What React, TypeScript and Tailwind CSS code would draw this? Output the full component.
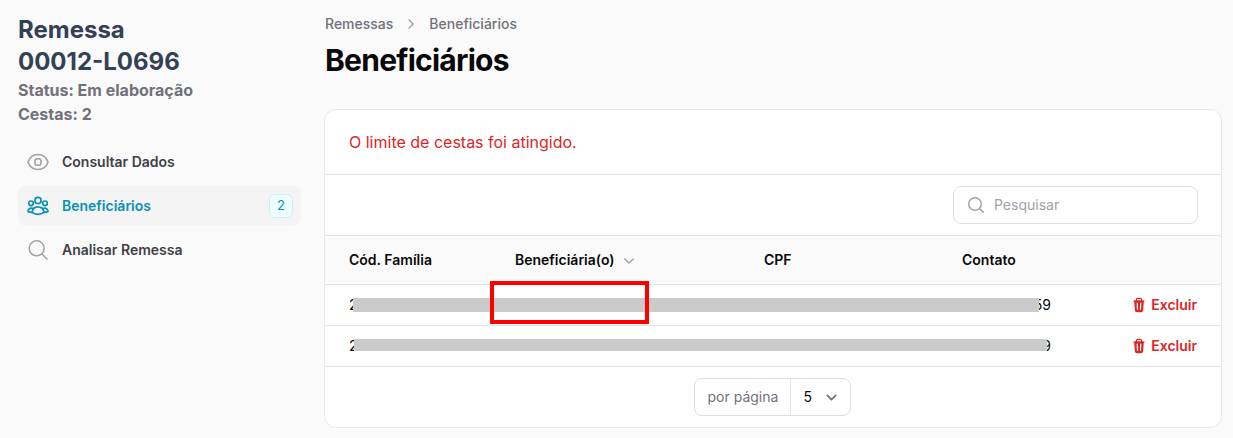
import type { ReactNode } from 'react';

function EyeIcon() {
  return (
    <svg viewBox="0 0 24 24" className="size-6 shrink-0 text-[#a1a1aa]" fill="none" stroke="currentColor" strokeWidth="1.6">
      <path d="M1.9 12C3.6 7.2 7.3 4.5 12 4.500S20.400 7.200 22.100 12C20.400 16.800 16.700 19.500 12 19.500S3.600 16.800 1.900 12Z" strokeLinejoin="round" />
      <rect x="9" y="8.800" width="6" height="6.400" rx="2.300" />
    </svg>
  );
}

function GroupIcon() {
  return (
    <svg viewBox="0 0 24 24" className="size-6 shrink-0 text-[#0891b2]" fill="none" stroke="currentColor" strokeWidth="1.7" strokeLinejoin="round" strokeLinecap="round">
      <circle cx="12" cy="6.400" r="3.100" />
      <circle cx="5" cy="9.300" r="2.300" />
      <circle cx="19" cy="9.300" r="2.300" />
      <path d="M6 18.400C6.400 14.900 8.700 12.900 12 12.900s5.600 2 6 5.500C16.200 19.800 14.200 20.300 12 20.300S7.800 19.800 6 18.400Z" />
      <path d="M6 18.400C4.500 18.400 3.100 18.100 2 17.500 2 15.500 3.500 14.200 5.500 14.200c.700 0 1.400.200 2 .500" />
      <path d="M18 18.400C19.500 18.400 20.900 18.100 22 17.500 22 15.500 20.500 14.200 18.500 14.200c-.700 0-1.400.200-2 .500" />
    </svg>
  );
}

function SearchIcon() {
  return (
    <svg viewBox="0 0 24 24" className="size-6 shrink-0 text-[#a1a1aa]" fill="none" stroke="currentColor" strokeWidth="1.5" strokeLinecap="round">
      <path d="m21 21-5.200-5.200m0 0A7.500 7.500 0 1 0 5.200 5.200a7.500 7.500 0 0 0 10.600 10.600Z" />
    </svg>
  );
}

function MiniSearchIcon() {
  return (
    <svg viewBox="0 0 20 20" className="size-5 shrink-0" fill="none" stroke="currentColor" strokeWidth="1.5" strokeLinecap="round">
      <circle cx="9" cy="9" r="6.250" />
      <path d="m13.500 13.500 3.750 3.750" />
    </svg>
  );
}

function TrashIcon() {
  return (
    <svg viewBox="0 0 20 20" className="size-4" fill="currentColor">
      <path fillRule="evenodd" clipRule="evenodd" d="M8.750 1A2.750 2.750 0 0 0 6 3.750v.443c-.795.077-1.584.176-2.365.298a.750.750 0 1 0 .230 1.482l.149-.022.841 10.518A2.750 2.750 0 0 0 7.596 19h4.807a2.750 2.750 0 0 0 2.742-2.530l.841-10.520.149.023a.750.750 0 0 0 .230-1.482A41.030 41.030 0 0 0 14 4.193V3.750A2.750 2.750 0 0 0 11.250 1h-2.500ZM10 4c.840 0 1.673.025 2.500.075V3.750c0-.690-.560-1.250-1.250-1.250h-2.500c-.690 0-1.250.560-1.250 1.250v.325C8.327 4.025 9.160 4 10 4ZM8.580 7.720a.750.750 0 0 0-1.500.060l.300 7.500a.750.750 0 1 0 1.500-.060l-.300-7.500Zm4.340.060a.750.750 0 1 0-1.500-.060l-.300 7.500a.750.750 0 1 0 1.500.060l.300-7.500Z" />
    </svg>
  );
}

function Chevron({ d, className }: { d: string; className: string }) {
  return (
    <svg viewBox="0 0 20 20" className={className} fill="none" stroke="currentColor" strokeLinecap="round" strokeLinejoin="round">
      <path d={d} />
    </svg>
  );
}

function NavItem({ icon, label, badge }: { icon: ReactNode; label: string; badge?: string }) {
  return (
    <a className={badge ? 'flex h-10 items-center gap-3 rounded-lg bg-[#f4f4f5] px-2 text-[#0891b2]' : 'flex h-10 items-center gap-3 rounded-lg px-2 text-[#3f3f46]'}>
      {icon}
      <span className="flex-1 text-sm font-semibold">{label}</span>
      {badge && (
        <span className="flex h-6 w-6 items-center justify-center rounded-md border border-[#ceeff6] bg-[#ecfeff] text-[13px] font-normal">{badge}</span>
      )}
    </a>
  );
}

function Row({ end, bar }: { end: string; bar: string }) {
  return (
    <div className="relative flex h-[41px] items-center border-b border-[#e4e4e7] px-6 text-sm">
      <span className="w-[613px]">2</span>
      <span className="w-[89px] text-right">{end}</span>
      <div className={bar} />
      <button className="ml-auto flex items-center gap-1 font-semibold text-[#dc2626]">
        <TrashIcon />
        Excluir
      </button>
    </div>
  );
}

export default function App() {
  return (
    <div className="flex h-[438px] w-[1233px] overflow-hidden bg-[#fafafa] font-['Inter',sans-serif] text-[#09090b]">
      <aside className="w-[324px] shrink-0 pl-[18px] pr-[23px] pt-[14px]">
        <h2 className="text-2xl/8 font-bold text-[#334155]">Remessa<br />00012-L0696</h2>
        <p className="text-base/6 font-bold text-[#71717a]">Status: Em elaboração<br />Cestas: 2</p>
        <nav className="mt-4 flex flex-col gap-1">
          <NavItem icon={<EyeIcon />} label="Consultar Dados" />
          <NavItem icon={<GroupIcon />} label="Beneficiários" badge="2" />
          <NavItem icon={<SearchIcon />} label="Analisar Remessa" />
        </nav>
      </aside>
      <main className="w-[898px] shrink-0 pt-[14px]">
        <div className="flex items-center gap-2 pl-px text-sm font-medium text-[#71717a]">
          <span>Remessas</span>
          <Chevron d="m8 6 4.200 4-4.200 4" className="size-5 stroke-[1.5] text-[#a1a1aa]" />
          <span>Beneficiários</span>
        </div>
        <h1 className="mt-2 pl-px text-3xl/9 font-bold tracking-tight">Beneficiários</h1>
        <section className="mt-[31px] h-[319px] overflow-hidden rounded-xl border border-[#e7e7e9] bg-white">
          <div className="flex h-[65px] items-center border-b border-[#e4e4e7] px-6 text-base text-[#dc2626]">O limite de cestas foi atingido.</div>
          <div className="flex h-[61px] items-center justify-end border-b border-[#e4e4e7] pr-[23px]">
            <div className="flex h-[38px] w-[245px] items-center gap-2 rounded-lg border border-[#dfdfe1] px-3 text-sm text-[#a1a1aa]">
              <MiniSearchIcon />
              Pesquisar
            </div>
          </div>
          <div className="flex h-[49px] items-center border-b border-[#e4e4e7] bg-[#fafafa] px-6 text-sm font-semibold">
            <span className="w-[166px]">Cód. Família</span>
            <span className="flex w-[249px] items-center gap-1">
              Beneficiária(o)
              <Chevron d="m5.700 9 4.300 4 4.300-4" className="size-5 stroke-[1.5] text-[#a1a1aa]" />
            </span>
            <span className="w-[198px]">CPF</span>
            <span>Contato</span>
          </div>
          <div className="relative">
            <Row end="59" bar="absolute left-[28px] top-[13px] h-[14px] w-[686px] bg-[#cbcbcb]" />
            <Row end="9" bar="absolute left-[29px] top-[13px] h-[12px] w-[693px] bg-[#cbcbcb]" />
            <div className="absolute left-[165px] top-[-4px] h-[43px] w-[159px] border-4 border-[#ff0000]" />
          </div>
          <div className="flex h-[60px] items-center justify-center pr-[2px]">
            <div className="flex h-[38px] w-[157px] items-center rounded-lg border border-[#dfdfe1] text-sm">
              <span className="flex h-full w-[96px] items-center border-r border-[#e4e4e7] pl-[13px] text-[#71717a]">por página</span>
              <span className="w-6 pl-[13px]">5</span>
              <Chevron d="m6 8 4 4 4-4" className="ml-1.5 size-[21px] stroke-[1.6] text-[#6b7280]" />
            </div>
          </div>
        </section>
      </main>
    </div>
  );
}
